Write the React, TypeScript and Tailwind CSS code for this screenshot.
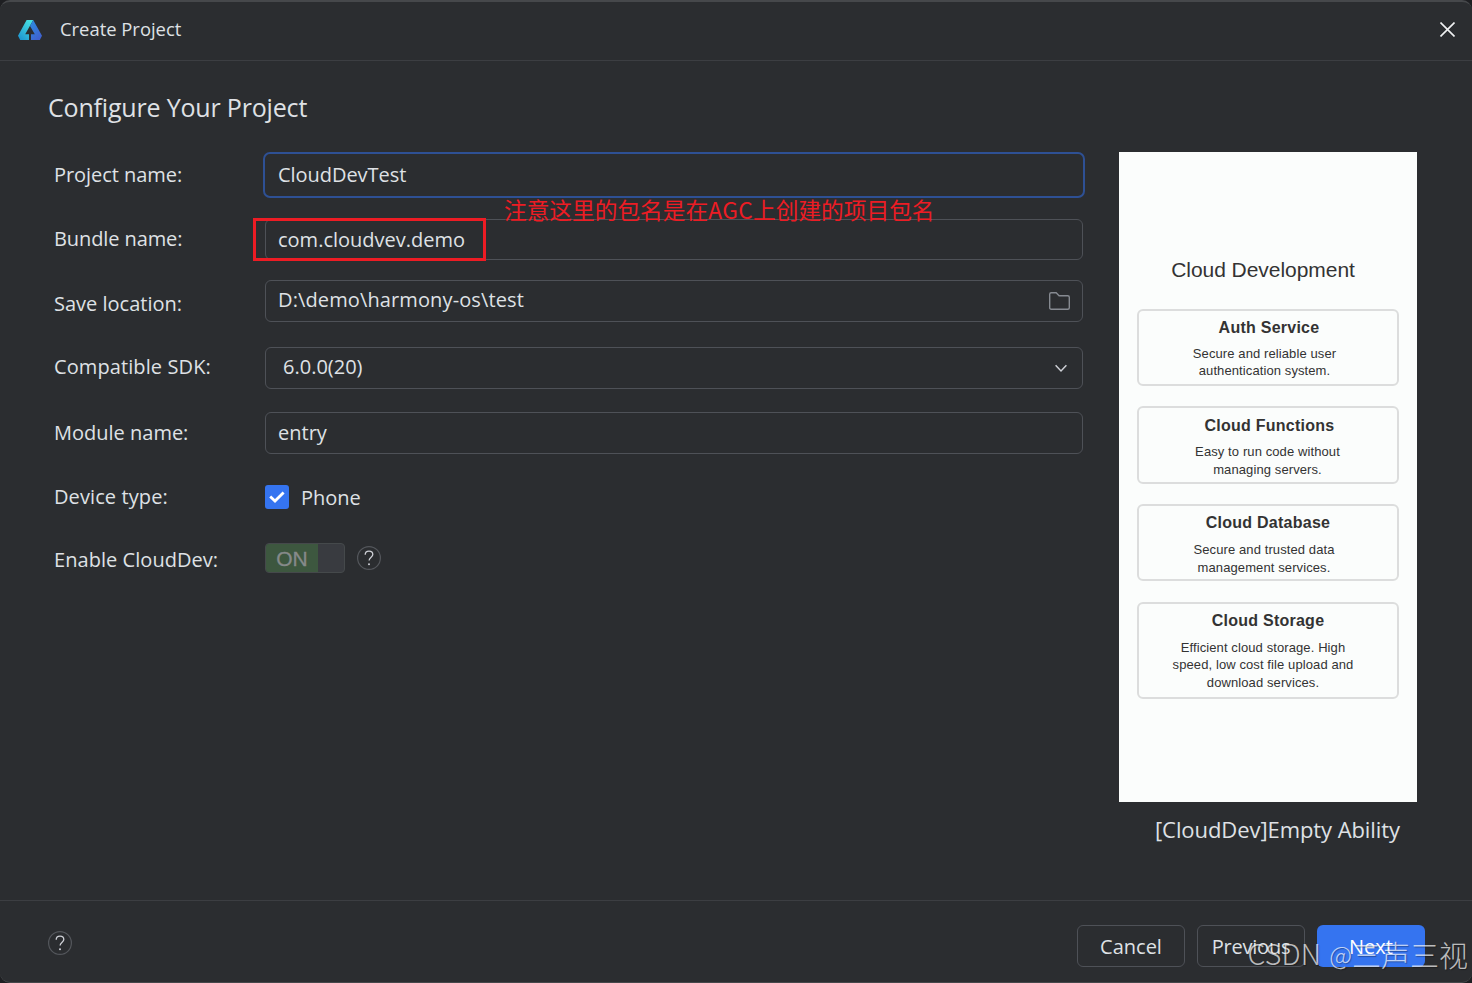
import { useState } from 'react';
import type { ReactNode } from 'react';

interface FormRowProps {
  label: string;
  className?: string;
  labelClass?: string;
  children: ReactNode;
}

interface Service {
  title: string;
  lines: string[];
  className: string;
  textClass: string;
}

const services: Service[] = [
  {
    title: 'Auth Service',
    lines: ['Secure and reliable user', 'authentication system.'],
    className: 'h-[77.5px] pt-[7px] pl-[2px]',
    textClass: 'mt-[7px] pr-[9px]',
  },
  {
    title: 'Cloud Functions',
    lines: ['Easy to run code without', 'managing servers.'],
    className: 'h-[77.5px] pt-[8px] pl-[3px]',
    textClass: 'mt-[7px] pr-[4px]',
  },
  {
    title: 'Cloud Database',
    lines: ['Secure and trusted data', 'management services.'],
    className: 'h-[77.5px] pt-[7px]',
    textClass: 'mt-[8px] pr-[8px]',
  },
  {
    title: 'Cloud Storage',
    lines: ['Efficient cloud storage. High', 'speed, low cost file upload and', 'download services.'],
    className: 'h-[97.5px] pt-[7px]',
    textClass: 'mt-[8px] pr-[10px]',
  },
];

function FormRow({ label, className = '', labelClass = '', children }: FormRowProps) {
  return (
    <div className={`flex items-center ${className}`}>
      <label className={`w-[211px] shrink-0 whitespace-nowrap text-[20px] leading-6 ${labelClass}`}>
        {label}
      </label>
      {children}
    </div>
  );
}

function HelpIcon() {
  return (
    <svg width="24" height="24" viewBox="0 0 24 24" fill="none">
      <circle cx="12" cy="12" r="11.4" stroke="#54575c" strokeWidth="1.2" />
      <path
        d="M8.2 8.7c0-2.3 1.5-3.6 3.8-3.6s3.8 1.3 3.8 3.3c0 2.7-3.7 2.9-3.7 6.2"
        stroke="#ced0d6"
        strokeWidth="1.3"
      />
      <circle cx="12" cy="18.3" r="1" fill="#ced0d6" />
    </svg>
  );
}

function Logo() {
  return (
    <svg width="24" height="20" viewBox="0 0 24 20">
      <defs>
        <linearGradient id="logoLeft" x1="0" y1="1" x2="0.7" y2="0">
          <stop offset="0" stopColor="#1b8fd0" />
          <stop offset="1" stopColor="#45dfe2" />
        </linearGradient>
        <linearGradient id="logoRight" x1="0" y1="0" x2="0.6" y2="1">
          <stop offset="0" stopColor="#2b8fe0" />
          <stop offset="1" stopColor="#3f62cf" />
        </linearGradient>
      </defs>
      <path d="M8.6 0H15.2L7.2 14.3H11V20H2.2L0 15.8Z" fill="url(#logoLeft)" />
      <path d="M15.2 0L24 15.8L21.8 20H13V14.3H16.8L12 6Z" fill="url(#logoRight)" />
    </svg>
  );
}

function ServiceCard({ service }: { service: Service }) {
  return (
    <div className={`rounded-[6px] border-2 border-[#dcdddd] text-center text-[#333] ${service.className}`}>
      <div className="text-[16px] leading-5 font-bold tracking-[0.25px]">{service.title}</div>
      <div className={`text-[13px] leading-[17.7px] tracking-[0.1px] ${service.textClass}`}>
        {service.lines.map((line) => (
          <div key={line}>{line}</div>
        ))}
      </div>
    </div>
  );
}

export default function App() {
  const [projectName, setProjectName] = useState('CloudDevTest');
  const [bundleName, setBundleName] = useState('com.cloudvev.demo');
  const [moduleName, setModuleName] = useState('entry');

  return (
    <div className="h-[983px] w-[1472px] overflow-hidden bg-[#1e1f22] font-['Open_Sans','Noto_Sans_CJK_SC',sans-serif] text-[#dfe1e5]">
      <div className="relative flex h-full flex-col rounded-[10px] border-t-2 border-b border-[#46484b] bg-[#2b2d30]">
        {/* Title bar */}
        <header className="flex h-[59px] items-center justify-between border-b border-[#3c3e42] pr-[17px] pb-[3px] pl-[18px]">
          <div className="flex items-center gap-[18px]">
            <Logo />
            <span className="pb-px text-[18.4px] leading-6">Create Project</span>
          </div>
          <svg width="15" height="15" viewBox="0 0 15 15" fill="none">
            <path d="M0.5 0.5L14.5 14.5M14.5 0.5L0.5 14.5" stroke="#f0f1f2" strokeWidth="1.6" />
          </svg>
        </header>

        {/* Body */}
        <main className="flex h-[839px] pl-[48px]">
          <section className="w-[1036px]">
            <h1 className="mt-[28px] h-[36px] text-[25px] leading-9 tracking-[-0.18px]">Configure Your Project</h1>

            <div className="mt-[27px] pl-[6px]">
              <FormRow label="Project name:" className="h-[46px]" labelClass="pb-px tracking-[-0.05px]">
                <div className="-ml-[2px] h-full w-[822px] shrink-0 rounded-[7px] border-2 border-[#2e5094]">
                  <input
                    className="h-full w-full bg-transparent px-[13px] pb-px text-[20px] tracking-[-0.05px] outline-none"
                    value={projectName}
                    onChange={(e) => setProjectName(e.target.value)}
                  />
                </div>
              </FormRow>

              <FormRow label="Bundle name:" className="mt-[21px] h-[41px]" labelClass="pb-px tracking-[-0.1px]">
                <div className="relative h-full w-[818px] shrink-0 rounded-[6px] border border-[#4e5157]">
                  <input
                    className="h-full w-full bg-transparent px-[12px] text-[20px] outline-none"
                    value={bundleName}
                    onChange={(e) => setBundleName(e.target.value)}
                  />
                  {/* Red marker and note drawn over the field */}
                  <div className="absolute -top-[2px] -left-[13px] h-[43px] w-[233px] border-3 border-[#ed1c24]" />
                  <div className="absolute -top-[26px] left-[238px] font-['Noto_Sans_CJK_SC',sans-serif] text-[22.7px] leading-[32px] whitespace-nowrap text-[#ed1c24]">
                    注意这里的包名是在<span className="tracking-[0.4px]">AGC</span>上创建的项目包名
                  </div>
                </div>
              </FormRow>

              <FormRow label="Save location:" className="mt-[20px] h-[42px]" labelClass="pt-[5px]">
                <div className="flex h-full w-[818px] shrink-0 items-center justify-between rounded-[6px] border border-[#4e5157] pr-[12px] pl-[12px]">
                  <span className="pb-[3px] text-[20px] leading-6 tracking-[0.12px]">D:\demo\harmony-os\test</span>
                  <svg width="21" height="18" viewBox="0 0 21 18" fill="none">
                    <path
                      d="M0.7 2.3C0.7 1.4 1.3 0.8 2.2 0.8H7.2L10.1 3.7H18.8C19.7 3.7 20.3 4.3 20.3 5.2V15.7C20.3 16.6 19.7 17.2 18.8 17.2H2.2C1.3 17.2 0.7 16.6 0.7 15.7Z"
                      stroke="#868a91"
                      strokeWidth="1.4"
                    />
                  </svg>
                </div>
              </FormRow>

              <FormRow label="Compatible SDK:" className="mt-[25px] h-[42px]" labelClass="pb-[3px] tracking-[0.1px]">
                <div className="flex h-full w-[818px] shrink-0 items-center justify-between rounded-[6px] border border-[#4e5157] pr-[15px] pl-[17px]">
                  <span className="pb-[2px] text-[20px] leading-6">6.0.0(20)</span>
                  <svg width="12" height="8" viewBox="0 0 12 8" fill="none">
                    <path d="M0.6 1.3L6 6.9L11.4 1.3" stroke="#ced0d6" strokeWidth="1.5" />
                  </svg>
                </div>
              </FormRow>

              <FormRow label="Module name:" className="mt-[23px] h-[42px]" labelClass="pb-px">
                <div className="h-full w-[818px] shrink-0 rounded-[6px] border border-[#4e5157]">
                  <input
                    className="h-full w-full bg-transparent px-[12px] pb-px text-[20px] outline-none"
                    value={moduleName}
                    onChange={(e) => setModuleName(e.target.value)}
                  />
                </div>
              </FormRow>

              <FormRow label="Device type:" className="mt-[31px] h-[24px]" labelClass="tracking-[0.1px]">
                <div className="flex h-[24px] w-[24px] items-center justify-center rounded-[3px] bg-[#3574f0]">
                  <svg width="16" height="12" viewBox="0 0 16 12" fill="none">
                    <path d="M1.2 5.4L6 10L14.6 1.4" stroke="#fff" strokeWidth="2.8" />
                  </svg>
                </div>
                <span className="ml-[12px] pt-[1px] text-[20px] leading-6">Phone</span>
              </FormRow>

              <FormRow label="Enable CloudDev:" className="mt-[34px] h-[30px]" labelClass="pt-[3px] tracking-[0.05px]">
                <div className="flex h-[30px] w-[80px] overflow-hidden rounded-[4px] border border-[#45494b] bg-[#393b40]">
                  <div className="flex w-[52px] items-center justify-center bg-[#3d573f] pt-px font-['Liberation_Sans',sans-serif] text-[21px] text-[#868a8a] [-webkit-text-stroke:0.3px_#868a8a]">
                    ON
                  </div>
                </div>
                <div className="ml-[12px]">
                  <HelpIcon />
                </div>
              </FormRow>
            </div>
          </section>

          {/* Template preview */}
          <aside className="ml-[35px] w-[298px] pt-[91px]">
            <div className="h-[650px] bg-[#fbfdfc] px-[18px] pt-[104px] font-['Liberation_Sans',sans-serif]">
              <div className="pr-[10px] text-center text-[21px] leading-7 tracking-[-0.05px] text-[#333]">
                Cloud Development
              </div>
              <div className="mt-[24.6px] flex flex-col gap-[20.2px]">
                {services.map((service) => (
                  <ServiceCard key={service.title} service={service} />
                ))}
              </div>
            </div>
            <div className="mt-[11px] pl-[36px] text-[22px] leading-8 tracking-[-0.08px] whitespace-nowrap">
              [CloudDev]Empty Ability
            </div>
          </aside>
        </main>

        {/* Footer */}
        <footer className="flex h-[82px] items-start justify-between border-t border-[#3c3e42] pt-[24px] pr-[47px] pl-[48px]">
          <div className="pt-[6px]">
            <HelpIcon />
          </div>
          <div className="flex gap-[12px] text-[20px]">
            <button className="h-[42px] w-[108px] rounded-[6px] border border-[#4e5157] pt-[2px]">Cancel</button>
            <button className="h-[42px] w-[108px] rounded-[6px] border border-[#4e5157] pt-[2px] tracking-[-0.2px]">
              Previous
            </button>
            <button className="h-[42px] w-[108px] rounded-[6px] bg-[#3574f0] pt-[2px] text-white">Next</button>
          </div>
        </footer>

        {/* Watermark */}
        <div className="absolute right-[4px] bottom-[8px] flex items-center font-['Noto_Sans_CJK_SC',sans-serif] text-[29px] leading-[40px] font-light whitespace-nowrap text-white/70 [text-shadow:1px_1px_1px_rgba(0,0,0,0.3)]">
          <span className="mr-[8px] pb-px text-[28.5px] tracking-[0.2px]">CSDN</span>
          <span className="text-[25px]">@</span>
          <span>三声三视</span>
        </div>
      </div>
    </div>
  );
}
